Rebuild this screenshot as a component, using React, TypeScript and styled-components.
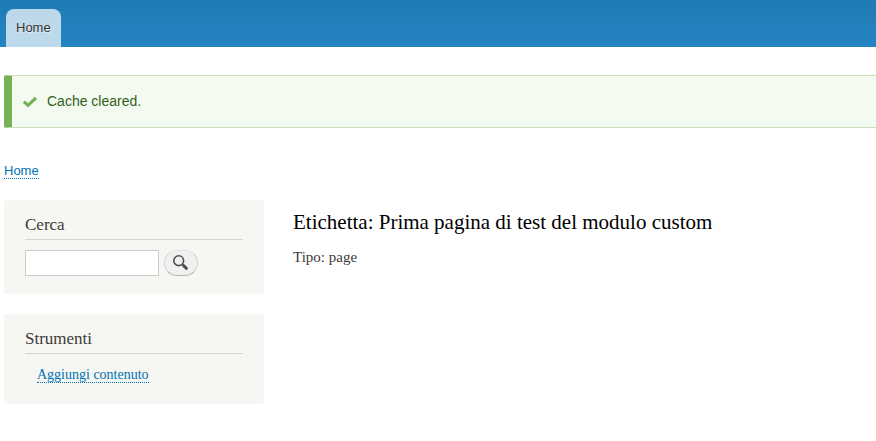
import React from "react";
import styled, { createGlobalStyle } from "styled-components";

const GlobalStyle = createGlobalStyle`
  * { box-sizing: border-box; }
  body {
    margin: 0;
    background: #fff;
    color: #3b3b3b;
    font-family: Georgia, "Liberation Serif", serif;
    font-size: 15px;
    line-height: 20px;
  }
`;

const sans = `"Helvetica Neue", "Liberation Sans", sans-serif`;

const Header = styled.header`
  padding: 9px 6px 0;
  background: linear-gradient(to bottom, #1f7ab4 0%, #2585c2 100%);
`;

const Tabs = styled.nav`
  display: flex;
`;

const Tab = styled.a`
  padding: 0 10px;
  border-radius: 8px 8px 0 0;
  background: rgba(255, 255, 255, 0.7);
  color: #333;
  font: 13px/38px ${sans};
  text-decoration: none;
  text-shadow: 0 1px #eee;
`;

const Page = styled.div`
  padding: 28px 0 36px 4px;
`;

const Message = styled.div`
  display: flex;
  align-items: center;
  gap: 9px;
  padding: 16px 20px 16px 10px;
  border: 1px solid #c9e1bd;
  border-left: 8px solid #77b259;
  border-right: 0;
  border-radius: 2px 0 0 2px;
  background: #f3faef;
  color: #325e1c;
  font: 14px/19px ${sans};
`;

const Breadcrumb = styled.nav`
  display: flex;
  margin: 36px 0 21px;
  font: 13px/14px ${sans};
`;

const Link = styled.a`
  border-bottom: 1px dotted #0071b3;
  color: #0071b3;
  text-decoration: none;
`;

const Columns = styled.div`
  display: flex;
  align-items: flex-start;
  gap: 29px;
`;

const Sidebar = styled.aside`
  display: flex;
  flex: 0 0 260px;
  flex-direction: column;
  gap: 20px;
`;

const Block = styled.section`
  padding: 15px 20px 17px;
  border: 1px solid #f9f9f9;
  background: #f6f6f2;
`;

const BlockTitle = styled.h2`
  margin: 0 0 10px;
  padding-bottom: 5px;
  border-bottom: 1px solid #d6d6d6;
  font-size: 17px;
  line-height: 18px;
  font-weight: 400;
`;

const SearchForm = styled.form`
  display: flex;
  gap: 5px;
`;

const SearchInput = styled.input`
  width: 134px;
  height: 26px;
  padding: 4px;
  border: 1px solid #ccc;
  border-radius: 0;
  background: #fff;
  font: 14px/16px ${sans};
`;

const SearchButton = styled.button`
  display: flex;
  align-items: center;
  justify-content: center;
  width: 34px;
  height: 26px;
  padding: 0;
  border: 1px solid #d2d2d2;
  border-top-color: #e4e4e4;
  border-bottom-color: #b4b4b4;
  border-radius: 13px;
  background: #f0f0f0;
  cursor: pointer;
`;

const Menu = styled.ul`
  display: flex;
  flex-direction: column;
  margin: 0;
  padding: 4px 0 3px 12px;
  list-style: none;
  font-size: 14px;
  line-height: 14px;
`;

const MenuItem = styled.li`
  display: flex;
`;

const Content = styled.main`
  flex: 1;
  min-width: 0;
  padding: 10px 20px 0 0;
`;

const ContentTitle = styled.h2`
  margin: 0 0 12px;
  color: #000;
  font-size: 21px;
  line-height: 25px;
  font-weight: 400;
`;

const Paragraph = styled.p`
  margin: 0;
`;

const CheckIcon = () => (
  <svg width="16" height="16" viewBox="0 0 16 16" aria-hidden="true">
    <path
      d="M1.800 7.600L6 11.300L14 3.900"
      fill="none"
      stroke="#73b355"
      strokeWidth="3.200"
    />
  </svg>
);

const SearchIcon = () => (
  <svg width="16" height="16" viewBox="0 0 16 16" aria-hidden="true">
    <circle cx="5.700" cy="5.700" r="4.900" fill="none" stroke="#505050" strokeWidth="1.600" />
    <path d="M9.200 9.200l1.500 1.500" stroke="#505050" strokeWidth="1.600" />
    <path d="M10.600 10.600l2.800 2.700" stroke="#505050" strokeWidth="3" strokeLinecap="round" />
  </svg>
);

export default function App() {
  return (
    <>
      <GlobalStyle />
      <Header>
        <Tabs aria-label="Main navigation">
          <Tab href="#">Home</Tab>
        </Tabs>
      </Header>
      <Page>
        <Message role="status">
          <CheckIcon />
          <span>Cache cleared.</span>
        </Message>
        <Breadcrumb aria-label="Breadcrumb">
          <Link href="#">Home</Link>
        </Breadcrumb>
        <Columns>
          <Sidebar>
            <Block>
              <BlockTitle>Cerca</BlockTitle>
              <SearchForm role="search" onSubmit={(e) => e.preventDefault()}>
                <SearchInput type="search" aria-label="Cerca" />
                <SearchButton type="submit" aria-label="Cerca">
                  <SearchIcon />
                </SearchButton>
              </SearchForm>
            </Block>
            <Block>
              <BlockTitle>Strumenti</BlockTitle>
              <Menu>
                <MenuItem>
                  <Link href="#">Aggiungi contenuto</Link>
                </MenuItem>
              </Menu>
            </Block>
          </Sidebar>
          <Content>
            <ContentTitle>Etichetta: Prima pagina di test del modulo custom</ContentTitle>
            <Paragraph>Tipo: page</Paragraph>
          </Content>
        </Columns>
      </Page>
    </>
  );
}
